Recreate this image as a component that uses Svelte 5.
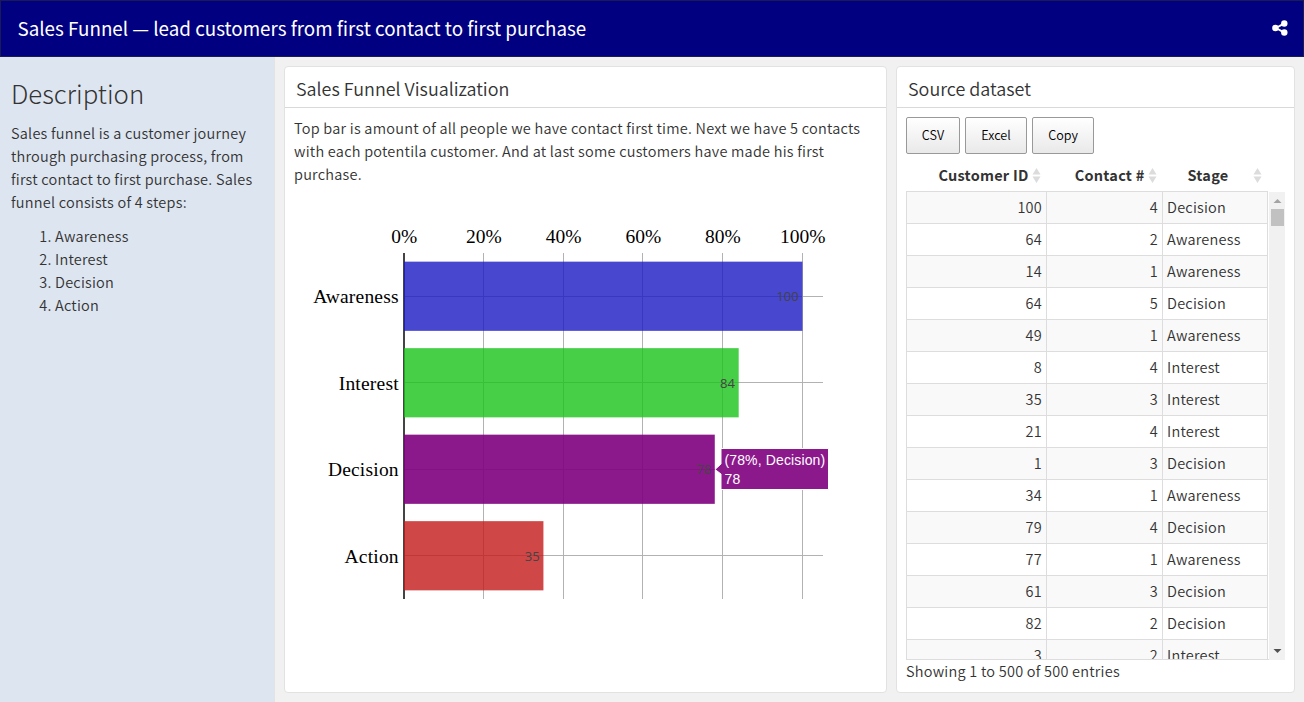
<script>
  const steps = ['Awareness', 'Interest', 'Decision', 'Action'];
  const ticks = [0, 20, 40, 60, 80, 100];
  const bars = [
    { name: 'Awareness', value: 100, color: '#1919c3' },
    { name: 'Interest', value: 84, color: '#19c319' },
    { name: 'Decision', value: 78, color: '#800080' },
    { name: 'Action', value: 35, color: '#c31919' }
  ];
  const X0 = 119.65;
  const Y0 = 54;
  const STEP = 86.5;
  const x = (v) => X0 + v * 3.985;
  const rows = [
    [100, 4, 'Decision'], [64, 2, 'Awareness'], [14, 1, 'Awareness'],
    [64, 5, 'Decision'], [49, 1, 'Awareness'], [8, 4, 'Interest'],
    [35, 3, 'Interest'], [21, 4, 'Interest'], [1, 3, 'Decision'],
    [34, 1, 'Awareness'], [79, 4, 'Decision'], [77, 1, 'Awareness'],
    [61, 3, 'Decision'], [82, 2, 'Decision'], [3, 2, 'Interest']
  ];
</script>

{#snippet sort()}
  <svg class="sort" width="9" height="15" viewBox="0 0 9 15"><path d="M4.5 0 8.5 6.5h-8zM.5 8.5h8L4.5 15z" fill="#dcdcdc" /></svg>
{/snippet}

<div class="page">
  <header>
    <span>Sales Funnel — lead customers from first contact to first purchase</span>
    <svg class="share" width="16" height="16" viewBox="0 0 16 16" fill="#fff">
      <path d="M4 8 12.3 3.3M4 8l8.3 4.7" stroke="#fff" stroke-width="2" />
      <circle cx="3.4" cy="8" r="3.2" /><circle cx="12.3" cy="3.5" r="3.2" /><circle cx="12.3" cy="12.5" r="3.2" />
    </svg>
  </header>
  <main>
    <aside>
      <h2>Description</h2>
      <p>Sales funnel is a customer journey<br />through purchasing process, from<br />first contact to first purchase. Sales<br />funnel consists of 4 steps:</p>
      <ol>
        {#each steps as s}<li>{s}</li>{/each}
      </ol>
    </aside>
    <section class="card chart">
      <h3>Sales Funnel Visualization</h3>
      <p>Top bar is amount of all people we have contact first time. Next we have 5 contacts<br />with each potentila customer. And at last some customers have made his first<br />purchase.</p>
      <svg class="plot" width="580" height="480" viewBox="0 0 580 480">
        <g class="grid">
          {#each ticks.slice(1) as t}
            <path d="M{Math.floor(x(t)) + 0.5} {Y0}v346" />
          {/each}
          {#each bars as _, i}
            <path d="M{X0} {Math.floor(Y0 + STEP * (i + 0.5)) + 0.5}H539" />
          {/each}
        </g>
        <path d="M120 {Y0}v346" stroke="#444" stroke-width="2" />
        {#each ticks as t}
          <text class="tick" x={x(t) + 0.5} y={Y0 - 10} text-anchor="middle">{t}%</text>
        {/each}
        {#each bars as b, i}
          <rect x="120" y={Y0 + STEP * i + 8.65} width={x(b.value) - 119.7} height="69.2" fill={b.color} opacity={b.name === 'Decision' ? 0.9 : 0.8} />
          <text class="tick name" x="114.8" y={Y0 + STEP * (i + 0.5) + 7.2} text-anchor="end">{b.name}</text>
          <text class="value" x={x(b.value) - 3.4} y={Y0 + STEP * (i + 0.5) + 5.2} text-anchor="end">{b.value}</text>
        {/each}
        <path d="M431 270.5l6-5.5V249.5h107.5v41H437V275z" fill="#8c198c" stroke="#fff" stroke-width="1" />
        <text class="tip" x="440.5" y="266">(78%, Decision)</text>
        <text class="tip" x="440.5" y="285">78</text>
      </svg>
    </section>
    <section class="card data">
      <h3>Source dataset</h3>
      <div class="body">
        <div class="buttons"><button>CSV</button><button>Excel</button><button>Copy</button></div>
        <div class="row head">
          <div>Customer ID{@render sort()}</div>
          <div>Contact #{@render sort()}</div>
          <div>Stage{@render sort()}</div>
        </div>
        <div class="scroll">
          <div class="rows">
            {#each rows as r, i}
              <div class="row" class:odd={i % 2 === 0}>
                {#each r as c}<div>{c}</div>{/each}
              </div>
            {/each}
          </div>
          <div class="bar">
            <svg width="16" height="16" viewBox="0 0 16 16"><path d="M4.5 11 8.5 7l4 4z" fill="#a3a3a3" /></svg>
            <div class="thumb"></div>
            <svg width="16" height="16" viewBox="0 0 16 16"><path d="M4.5 5h8l-4 4z" fill="#505050" /></svg>
          </div>
        </div>
        <div class="info">Showing 1 to 500 of 500 entries</div>
      </div>
    </section>
  </main>
</div>

<style>
  :global(body) { margin: 0; }
  .page {
    width: 1304px; height: 702px; overflow: hidden; display: flex; flex-direction: column;
    background: #f1f1f1; color: #333; font-family: "Noto Sans CJK SC", sans-serif; font-size: 14.5px; line-height: 23px;
    font-weight: 350; letter-spacing: 0.23px; box-sizing: border-box;
  }
  .page :global(*) { box-sizing: border-box; }
  header {
    height: 57px; flex: none; background: #000080; border: 1px solid #1b1b54; color: #fff; font-size: 18.8px; font-weight: 400; letter-spacing: 0;
    display: flex; align-items: center; justify-content: space-between; padding: 0 15px 2px 16.5px; white-space: nowrap;
  }
  main { flex: 1; display: flex; min-height: 0; }
  aside { width: 275px; flex: none; background: #dde5f0; border-right: 1px solid #e3e3e3; padding: 20px 0 0 11px; }
  h2 { font-weight: 300; font-size: 25.8px; line-height: 32px; margin: 0 0 12px; letter-spacing: 0; }
  p { margin: 0; white-space: nowrap; }
  ol { margin: 11px 0 0; padding-left: 44px; }
  .card { background: #fff; border: 1px solid #e2e2e2; border-radius: 4px; height: 627px; margin-top: 9px; }
  .chart { width: 603px; margin-left: 9px; flex: none; }
  .data { width: 399px; margin-left: 9px; flex: none; }
  h3 { margin: 0; height: 41px; border-bottom: 1px solid #d9d9d9; font-weight: 350; font-size: 17.95px; line-height: 43px; padding-left: 11px; letter-spacing: 0; }
  .chart p { padding: 8px 0 0 9px; }
  .plot { display: block; margin: 14px 0 0 -1px; overflow: visible; letter-spacing: 0; }
  .grid { stroke: #b2b2b2; fill: none; }
  .tick { font: 19.5px "Liberation Serif", serif; fill: #000; }
  .name { letter-spacing: 0.2px; }
  .value { font: 13px "Open Sans", sans-serif; fill: #444; }
  .tip { font: 14px "Liberation Sans", sans-serif; fill: #fff; letter-spacing: 0.13px; }
  .body { padding: 9px 9px 0; }
  .buttons { display: flex; gap: 5px; }
  button {
    height: 37px; border: 1px solid #999; border-radius: 2px; background: linear-gradient(#fff, #e9e9e9);
    color: #000; font: 350 12.6px "Noto Sans CJK SC", sans-serif; padding: 0 14px 2px; width: 62px;
  }
  button:first-child { width: 54px; }
  .row { display: grid; grid-template-columns: 140px 116px 105px; height: 32px; line-height: 29px; }
  .row > div { border-right: 1px solid #ddd; border-bottom: 1px solid #ddd; text-align: right; padding: 0 4px; }
  .row > div:last-child { text-align: left; }
  .row.odd { background: #f9f9f9; }
  .head { width: 362px; height: 38px; font-weight: 700; border-bottom: 1px solid #ddd; padding-left: 1px; }
  .head > div { border: 0; display: flex; align-items: center; justify-content: flex-end; gap: 3px; padding: 4px 6.5px 0 0; line-height: 30px; }
  .head > div:last-child { justify-content: space-between; padding-left: 24.5px; }
  .sort { position: relative; top: 1px; }
  .scroll { height: 468px; display: flex; }
  .rows { width: 363px; height: 468px; overflow: hidden; border-bottom: 1px solid #ddd; }
  .rows .row { width: 362px; border-left: 1px solid #ddd; }
  .bar { width: 16px; background: #f1f1f1; display: flex; flex-direction: column; }
  .bar svg { display: block; flex: none; }
  .thumb { width: 13px; height: 17px; margin: 1px 0 auto 2px; background: #c1c1c1; }
  .info { line-height: 21px; }
</style>
